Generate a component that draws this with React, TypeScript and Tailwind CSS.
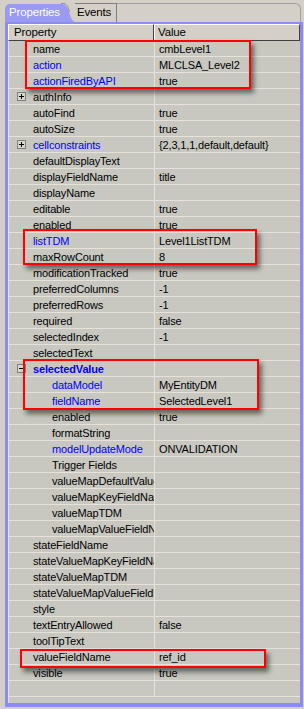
import React from "react";

type Row = {
  name: string;
  value?: string;
  indent?: boolean;
  blue?: boolean;
  bold?: boolean;
  toggle?: "plus" | "minus";
};

const rows: Row[] = [
  { name: "name", value: "cmbLevel1" },
  { name: "action", value: "MLCLSA_Level2", blue: true },
  { name: "actionFiredByAPI", value: "true", blue: true },
  { name: "authInfo", toggle: "plus" },
  { name: "autoFind", value: "true" },
  { name: "autoSize", value: "true" },
  { name: "cellconstraints", value: "{2,3,1,1,default,default}", blue: true, toggle: "plus" },
  { name: "defaultDisplayText" },
  { name: "displayFieldName", value: "title" },
  { name: "displayName" },
  { name: "editable", value: "true" },
  { name: "enabled", value: "true" },
  { name: "listTDM", value: "Level1ListTDM", blue: true },
  { name: "maxRowCount", value: "8" },
  { name: "modificationTracked", value: "true" },
  { name: "preferredColumns", value: "-1" },
  { name: "preferredRows", value: "-1" },
  { name: "required", value: "false" },
  { name: "selectedIndex", value: "-1" },
  { name: "selectedText" },
  { name: "selectedValue", blue: true, bold: true, toggle: "minus" },
  { name: "dataModel", value: "MyEntityDM", indent: true, blue: true },
  { name: "fieldName", value: "SelectedLevel1", indent: true, blue: true },
  { name: "enabled", value: "true", indent: true },
  { name: "formatString", indent: true },
  { name: "modelUpdateMode", value: "ONVALIDATION", indent: true, blue: true },
  { name: "Trigger Fields", indent: true },
  { name: "valueMapDefaultValue", indent: true },
  { name: "valueMapKeyFieldName", indent: true },
  { name: "valueMapTDM", indent: true },
  { name: "valueMapValueFieldName", indent: true },
  { name: "stateFieldName" },
  { name: "stateValueMapKeyFieldName" },
  { name: "stateValueMapTDM" },
  { name: "stateValueMapValueFieldName" },
  { name: "style" },
  { name: "textEntryAllowed", value: "false" },
  { name: "toolTipText" },
  { name: "valueFieldName", value: "ref_id" },
  { name: "visible", value: "true" },
];

function Toggle({ kind }: { kind: "plus" | "minus" }) {
  return (
    <svg width="9" height="9" viewBox="0 0 9 9" className="shrink-0">
      <rect x="0.5" y="0.5" width="8" height="8" fill="#d8d8d0" stroke="#808080" />
      <line x1="2" y1="4.5" x2="7" y2="4.5" stroke="#000" />
      {kind === "plus" && <line x1="4.5" y1="2" x2="4.5" y2="7" stroke="#000" />}
    </svg>
  );
}

function PropRow({ row }: { row: Row }) {
  return (
    <div className="flex h-[16px] border-b border-[#e6e2da]">
      <div className="relative flex w-[146px] shrink-0 items-center overflow-hidden border-r border-[#e6e2da]">
        {row.toggle && (
          <div className="absolute left-[8px] top-[3px]">
            <Toggle kind={row.toggle} />
          </div>
        )}
        <span
          className={
            "whitespace-nowrap pt-px leading-[15px] " +
            (row.indent ? "pl-[43px] " : "pl-[24px] ") +
            (row.blue ? "text-[#0000ff] " : "text-black ") +
            (row.bold ? "font-bold" : "")
          }
        >
          {row.name}
        </span>
      </div>
      <div className="flex flex-1 items-center overflow-hidden pl-[4px]">
        <span className="whitespace-nowrap pt-px leading-[15px] text-black">{row.value}</span>
      </div>
    </div>
  );
}

function Callout({ className }: { className: string }) {
  return (
    <div
      className={
        "pointer-events-none absolute border-2 border-[#ff0000] shadow-[3px_4px_5px_rgba(0,0,0,0.5)] " +
        className
      }
    />
  );
}

export default function App() {
  return (
    <div
      className="relative h-[709px] w-[304px] overflow-hidden bg-[#d4d0c8] text-[11px] tracking-[-0.15px]"
      style={{ fontFamily: '"Liberation Sans", Arial, sans-serif' }}
    >
      {/* Tabs */}
      <div className="flex h-[22px] items-end pl-[5px]">
        <div className="flex h-[18px] items-center rounded-tl-[5px] bg-[#9a9af2] pl-[4px] pr-[2px] text-[11.5px] text-white">
          Properties
        </div>
        <svg width="14" height="19" viewBox="0 0 14 19" className="shrink-0 -ml-px">
          <path d="M0 1 C5 1 6 4 8 9 C10 15 11 18 14 19 L0 19 Z" fill="#9a9af2" />
          <path d="M0 0.5 L3 0.5 C6 1 7 4 8.5 9" fill="none" stroke="#808080" strokeWidth="0.8" />
        </svg>
        <div className="flex h-[19px] items-center border-r border-t border-[#808080] pl-[2px] pr-[5px] text-[11.5px] text-black">
          Events
        </div>
        <div className="mr-[3px] h-[19px] flex-1 rounded-tr-[6px] border-r border-t border-[#a0a0a0]" />
      </div>

      {/* Frame */}
      <div className="ml-[5px] mr-[1px] h-[685px] border-b-4 border-l-[3px] border-r-[3px] border-t-2 border-[#8c8cf0]">
        {/* Header */}
        <div className="flex h-[17px] bg-[#d4d0c8]">
          <div className="flex w-[146px] shrink-0 items-center border border-b-[#404040] border-l-white border-r-[#404040] border-t-white pl-[5px] text-[11.5px] text-black">
            Property
          </div>
          <div className="flex flex-1 items-center border border-b-[#404040] border-l-white border-r-[#404040] border-t-white pl-[3px] text-[11.5px] text-black">
            Value
          </div>
        </div>

        {/* Rows */}
        <div className="h-[662px] border-l border-[#e6e2da] bg-[#c8c8c0]">
          {rows.map((r, i) => (
            <PropRow key={i} row={r} />
          ))}
          <div className="flex h-[16px] border-b border-[#e6e2da]">
            <div className="w-[146px] shrink-0 border-r border-[#e6e2da]" />
          </div>
        </div>
      </div>

      {/* Annotations */}
      <Callout className="left-[25px] top-[40px] h-[49px] w-[226px]" />
      <Callout className="left-[23px] top-[229px] h-[36px] w-[234px]" />
      <Callout className="left-[23px] top-[359px] h-[51px] w-[236px]" />
      <Callout className="left-[20px] top-[649px] h-[19px] w-[246px]" />
    </div>
  );
}
